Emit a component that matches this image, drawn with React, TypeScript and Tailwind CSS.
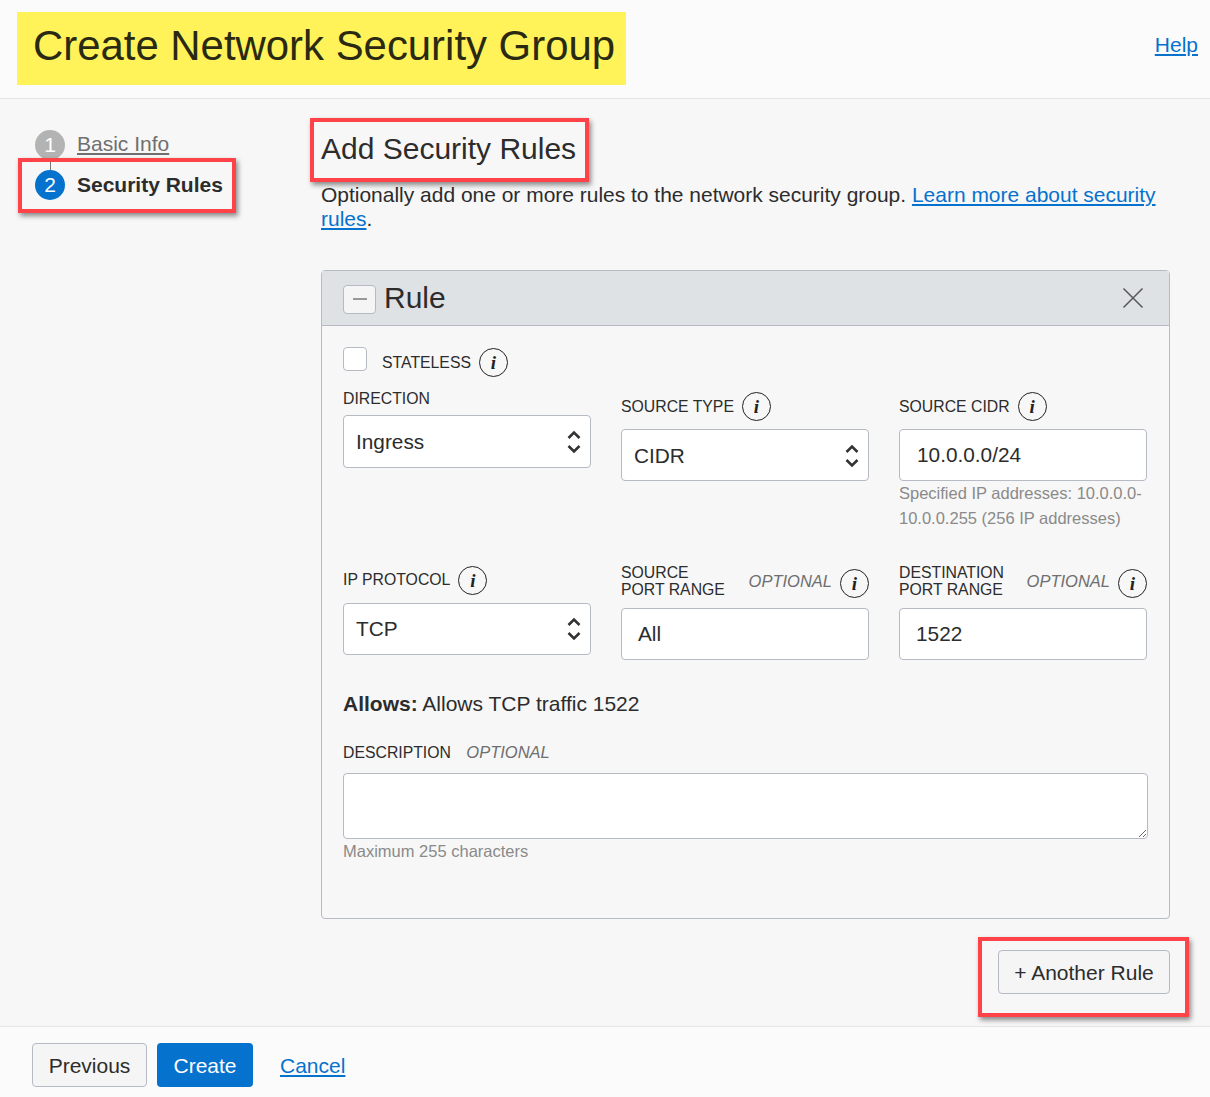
import React from 'react';

const InfoIcon: React.FC<{ className?: string }> = ({ className = '' }) => (
  <span
    className={`inline-flex h-[29px] w-[29px] shrink-0 items-center justify-center rounded-full border-[1.5px] border-[#222] font-['Liberation_Serif',serif] text-[19px] font-bold italic leading-none text-[#222] ${className}`}
  >
    i
  </span>
);

const Chevrons = () => (
  <svg width="16" height="26" viewBox="0 0 16 26" fill="none" stroke="#333" strokeWidth="2.6" className="shrink-0">
    <path d="M2.5 9 L8 3.5 L13.5 9" />
    <path d="M2.5 17 L8 22.5 L13.5 17" />
  </svg>
);

const Select: React.FC<{ value: string; className?: string }> = ({ value, className = '' }) => (
  <div className={`flex h-[52px] items-center justify-between rounded border border-[#b5bac4] bg-white pl-3 pr-[8px] text-[20.8px] text-[#2c2c2c] ${className}`}>
    <span>{value}</span>
    <Chevrons />
  </div>
);

const TextBox: React.FC<{ value: string; className?: string }> = ({ value, className = '' }) => (
  <div className={`flex h-[52px] items-center rounded border border-[#b5bac4] bg-white text-[20.8px] text-[#2c2c2c] ${className}`}>
    {value}
  </div>
);

const Optional: React.FC<{ className?: string }> = ({ className = '' }) => (
  <span className={`text-[16.5px] italic text-[#6f6f6f] ${className}`}>OPTIONAL</span>
);

const RangeLabel: React.FC<{ top: string; bottom: string }> = ({ top, bottom }) => (
  <div className="-mt-px flex h-[38px] items-center">
    <div className="text-[15.8px] leading-[17px] text-[#2c2c2c]">
      {top}
      <br />
      {bottom}
    </div>
    <Optional className="ml-auto mr-[8px]" />
    <InfoIcon className="mt-[4px]" />
  </div>
);

const App: React.FC = () => {
  return (
    <div className="relative flex h-[1097px] w-[1210px] flex-col overflow-hidden bg-[#f7f7f7] font-['Liberation_Sans',Arial,sans-serif] text-[#2c2c2c]">
      <header className="flex h-[99px] shrink-0 items-start justify-between border-b border-[#e5e5e5] bg-[#fbfbfb] pl-[17px] pr-3 pt-3">
        <h1 className="flex h-[73px] w-[609px] items-center whitespace-nowrap bg-[#fff359] pb-[4px] pl-4 text-[41.9px] font-normal text-[#2a2a12]">
          Create Network Security Group
        </h1>
        <a className="mt-[17px] text-[21px] text-[#0572ce] underline">Help</a>
      </header>

      <main className="flex flex-1">
        <nav className="w-[321px] shrink-0 pl-[35px] pt-[31px]">
          <div className="relative flex h-[40px] items-start">
            <span className="flex h-[30px] w-[30px] items-center justify-center rounded-full bg-[#b3b3b3] text-[21px] text-white">1</span>
            <a className="ml-3 text-[21px] leading-[28px] text-[#6f6f6f] underline">Basic Info</a>
            <span className="absolute left-[15px] top-[30px] h-[10px] w-px bg-[#777]" />
          </div>
          <div className="flex items-start">
            <span className="flex h-[30px] w-[30px] items-center justify-center rounded-full bg-[#0572ce] text-[21px] text-white">2</span>
            <span className="ml-3 text-[21px] font-bold leading-[30px] text-[#2c2c2c]">Security Rules</span>
          </div>
        </nav>

        <section className="w-[849px] shrink-0 pt-[30px]">
          <h2 className="text-[30px] font-normal leading-[40px] text-[#2c2c2c]">Add Security Rules</h2>
          <p className="mt-[14px] text-[20.97px] leading-[24px] text-[#2c2c2c]">
            Optionally add one or more rules to the network security group.{' '}
            <a className="text-[#0572ce] underline">Learn more about security rules</a>.
          </p>

          <div className="mt-[39px] h-[649px] rounded border border-[#b5bac4]">
            <div className="flex h-[55px] items-center justify-between border-b border-[#b5bac4] bg-[#dfe2e5] pl-[21px] pr-[25px] pt-[2px]">
              <div className="flex items-center">
                <span className="flex h-[29px] w-[33px] items-center justify-center rounded border border-[#b5bac4] bg-[#f5f5f5]">
                  <span className="h-[1.5px] w-[14px] bg-[#999]" />
                </span>
                <span className="mb-[2px] ml-2 text-[30px] leading-none text-[#2c2c2c]">Rule</span>
              </div>
              <svg width="22" height="22" viewBox="0 0 22 22" stroke="#555" strokeWidth="1.5" className="mb-[2px]">
                <path d="M1.5 1.5 L20.5 20.5 M20.5 1.5 L1.5 20.5" />
              </svg>
            </div>

            <div className="px-[21px]">
              <div className="mt-[22px] flex h-[29px] items-center">
                <span className="mb-[8px] h-[24px] w-[24px] rounded border border-[#b5bac4] bg-white" />
                <span className="ml-[15px] text-[15.8px] text-[#2c2c2c]">STATELESS</span>
                <InfoIcon className="ml-2" />
              </div>

              <div className="grid grid-cols-[248px_248px_248px] gap-x-[30px]">
                <div className="mt-[12px]">
                  <div className="h-[24px] text-[15.8px] leading-[20px]">DIRECTION</div>
                  <Select value="Ingress" className="mt-[2px] !h-[53px]" />
                </div>
                <div className="mt-[15px]">
                  <div className="flex h-[29px] items-center text-[15.8px]">
                    SOURCE TYPE <InfoIcon className="ml-2" />
                  </div>
                  <Select value="CIDR" className="mt-[8px] pt-[2px]" />
                </div>
                <div className="mt-[15px]">
                  <div className="flex h-[29px] items-center text-[15.8px]">
                    SOURCE CIDR <InfoIcon className="ml-2" />
                  </div>
                  <TextBox value="10.0.0.0/24" className="mt-[8px] pl-[17px]" />
                  <p className="text-[16.5px] leading-[25px] text-[#8a8a8a]">
                    Specified IP addresses: 10.0.0.0-10.0.0.255 (256 IP addresses)
                  </p>
                </div>
              </div>

              <div className="mt-[32px] grid grid-cols-[248px_248px_248px] gap-x-[30px]">
                <div>
                  <div className="-mt-[2px] flex h-[38px] items-center text-[15.8px]">
                    IP PROTOCOL <InfoIcon className="ml-2" />
                  </div>
                  <Select value="TCP" className="mt-[4px]" />
                </div>
                <div>
                  <RangeLabel top="SOURCE" bottom="PORT RANGE" />
                  <TextBox value="All" className="mt-[8px] pl-4" />
                </div>
                <div>
                  <RangeLabel top="DESTINATION" bottom="PORT RANGE" />
                  <TextBox value="1522" className="mt-[8px] pl-4" />
                </div>
              </div>

              <div className="mt-[31px] text-[21px] leading-[26px]">
                <b>Allows:</b> Allows TCP traffic 1522
              </div>

              <div className="mt-[25px] text-[15.8px] leading-[20px]">
                DESCRIPTION <Optional className="ml-[11px]" />
              </div>
              <textarea className="mt-[10px] block h-[66px] w-[805px] rounded border border-[#b5bac4] bg-white" />
              <div className="mt-[2px] text-[16.5px] leading-[20px] text-[#8a8a8a]">Maximum 255 characters</div>
            </div>
          </div>

          <div className="mt-[31px] flex justify-end">
            <button className="h-[44px] w-[172px] rounded border border-[#b5bac4] bg-[#f5f5f5] pt-[2px] text-[21px] text-[#2c2c2c]">
              + Another Rule
            </button>
          </div>
        </section>
      </main>

      <footer className="flex h-[71px] shrink-0 items-start border-t border-[#e5e5e5] bg-[#fbfbfb] pl-[32px] pt-[16px]">
        <button className="h-[44px] w-[115px] rounded border border-[#b5bac4] bg-[#f5f5f5] pt-[2px] text-[21px] text-[#2c2c2c]">Previous</button>
        <button className="ml-[10px] h-[44px] w-[96px] rounded bg-[#0572ce] pt-[2px] text-[21px] text-white">Create</button>
        <a className="ml-[27px] mt-[10px] text-[21px] leading-[26px] text-[#0572ce] underline">Cancel</a>
      </footer>

      {/* red annotation boxes on top of the screenshot */}
      <div className="pointer-events-none absolute left-[18px] top-[158px] h-[55px] w-[218px] border-4 border-[#ff4348] shadow-[2px_3px_5px_rgba(0,0,0,0.45)]" />
      <div className="pointer-events-none absolute left-[310px] top-[118px] h-[64px] w-[279px] border-4 border-[#ff4348] shadow-[2px_3px_5px_rgba(0,0,0,0.45)]" />
      <div className="pointer-events-none absolute left-[978px] top-[937px] h-[80px] w-[211px] border-4 border-[#ff4348] shadow-[2px_3px_5px_rgba(0,0,0,0.45)]" />
    </div>
  );
};

export default App;
